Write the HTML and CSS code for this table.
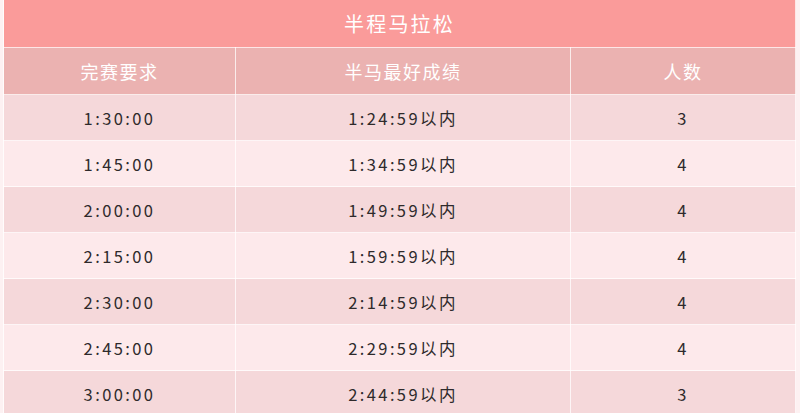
FILE: index.html
```html
<!DOCTYPE html>
<html lang="zh">
<head>
<meta charset="utf-8">
<link rel="stylesheet" href="styles.css">
</head>
<body>
<table class="race">
  <colgroup>
    <col class="c1"><col class="c2"><col class="c3">
  </colgroup>
  <thead>
    <tr class="title"><th colspan="3">半程马拉松</th></tr>
    <tr class="head"><th>完赛要求</th><th>半马最好成绩</th><th>人数</th></tr>
  </thead>
  <tbody>
    <tr class="odd"><td>1:30:00</td><td>1:24:59以内</td><td>3</td></tr>
    <tr class="even"><td>1:45:00</td><td>1:34:59以内</td><td>4</td></tr>
    <tr class="odd"><td>2:00:00</td><td>1:49:59以内</td><td>4</td></tr>
    <tr class="even"><td>2:15:00</td><td>1:59:59以内</td><td>4</td></tr>
    <tr class="odd"><td>2:30:00</td><td>2:14:59以内</td><td>4</td></tr>
    <tr class="even"><td>2:45:00</td><td>2:29:59以内</td><td>4</td></tr>
    <tr class="odd"><td>3:00:00</td><td>2:44:59以内</td><td>3</td></tr>
  </tbody>
</table>
</body>
</html>
```
FILE: styles.css
```css
html, body {
  margin: 0;
  padding: 0;
  background: #fdf1f2;
}
body {
  padding: 0 5px 0 3px;
  font-family: "Noto Sans CJK SC", "Noto Sans", sans-serif;
}
.race {
  width: 792px;
  border-collapse: collapse;
  table-layout: fixed;
}
.c1 { width: 232px; }
.c2 { width: 335px; }
.c3 { width: 225px; }
.race th, .race td {
  border: 1px solid rgba(255, 255, 255, 0.75);
  text-align: center;
  padding: 0;
  font-weight: normal;
}
.title th {
  height: 47px;
  background: #fa9b9a;
  color: #fff;
  font-size: 20px;
  letter-spacing: 2.2px;
  border-top: none;
}
.head th {
  height: 46px;
  background: #ebb2b1;
  color: #fff;
  font-size: 18px;
  letter-spacing: 1.5px;
}
.race td {
  height: 45px;
  font-size: 16.5px;
  letter-spacing: 2.4px;
  color: #2e2a2b;
}
.odd td { background: #f5d8da; }
.even td { background: #fde9eb; }
```
